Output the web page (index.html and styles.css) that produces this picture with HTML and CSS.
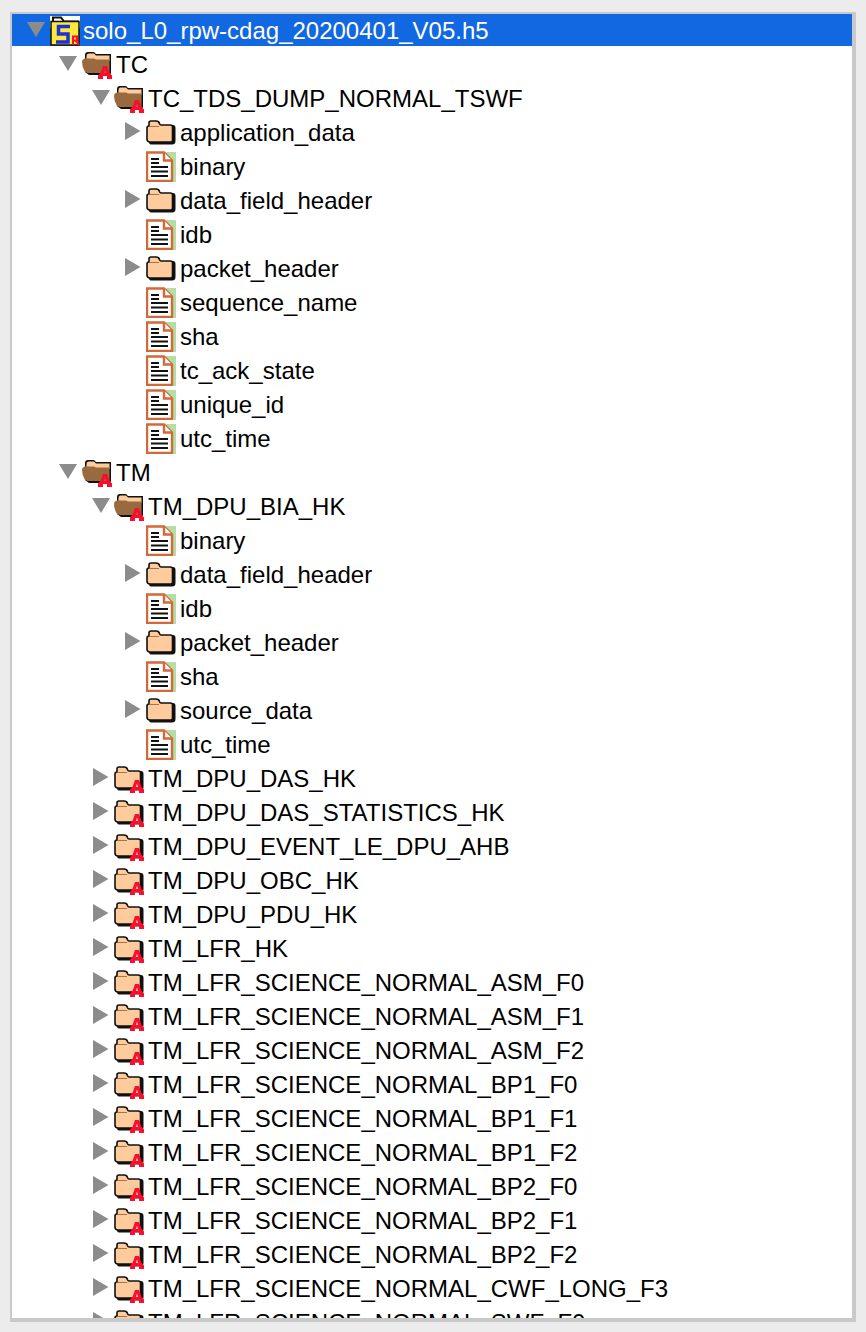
FILE: index.html
```html
<!DOCTYPE html>
<html lang="en">
<head>
<meta charset="utf-8">
<title>HDF5 tree</title>
<link rel="stylesheet" href="styles.css">
</head>
<body>
<svg class="defs" width="0" height="0" aria-hidden="true">
  <defs>
    <symbol id="tri-down" viewBox="0 0 20 20"><polygon points="0,2 18,2 9,17" fill="#8c8c8c"/></symbol>
    <symbol id="tri-right" viewBox="0 0 20 20"><polygon points="1,0 16.500,9 1,18" fill="#8c8c8c"/></symbol>
    <symbol id="attr" viewBox="0 0 32 32" overflow="visible">
      <path fill-rule="evenodd" d="M21 18H25L27.500 25L30 27.500V31H25V28H21V31H16V27.500L18.500 25ZM23 21.500L21.800 25H24.200Z" fill="#fb0d2c"/>
    </symbol>
    <symbol id="folder" viewBox="0 0 32 32" overflow="visible">
      <path d="M4 8Q4 6 6 6H12L15 9H27Q29.500 9 29.500 12V25Q29.500 28.500 26 28.500H5Q3 28.500 3 26Z" fill="#111"/>
      <path d="M3 10Q1 10 1 12V23Q1 26 4 26H24.500Q26.500 26 26.500 24V11Q26.500 9 24.500 9H15Q14 9 13.500 7.500Q13 5 10 5H5Q3 5 3 7Z" fill="#fdcb9c" stroke="#111" stroke-width="1.600"/>
      <path d="M3.500 10.500H13" fill="none" stroke="#a5744a" stroke-width="1"/>
    </symbol>
    <symbol id="open" viewBox="0 0 32 32" overflow="visible">
      <path d="M3 7Q3 4 6 4H12L14 6H29V25L28 27H7L3 24Z" fill="#111"/>
      <path d="M4.500 8Q4.500 5.500 6.500 5.500H12L14 7.500H27.500V13H4.500Z" fill="#fdcb9c"/>
      <path d="M0 14Q0 11 3 10.500H12L14 11.500H27.500V25H6L3 24Q0 19 0 14Z" fill="#9a6a3f"/>
    </symbol>
    <symbol id="doc" viewBox="0 0 32 32">
      <rect x="20" y="2" width="10" height="30" fill="#b5dea5"/>
      <path d="M1 2.500H18L26 10.500V31H1Z" fill="#fff" stroke="#d3683a" stroke-width="2.400"/>
      <path d="M18 2.500V10.500H26" fill="#fff" stroke="#d3683a" stroke-width="2.400"/>
      <path d="M5 9H13M5 13H13M5 17H22M5 21.500H22M5 26H22" stroke="#111" stroke-width="2.200"/>
    </symbol>
    <symbol id="h5" viewBox="0 0 32 32">
      <rect x="0" y="2" width="30" height="12" fill="#fff"/>
      <path d="M3 9V3.500H11L14 7.500H29" fill="none" stroke="#111" stroke-width="2"/>
      <rect x="1" y="7.500" width="28" height="23.500" fill="#fde93a" stroke="#111" stroke-width="1.500"/>
      <path d="M20 12.500H8.500V20H18V28H6" fill="none" stroke="#1c2fd8" stroke-width="3.500"/>
      <path d="M23 31V22.500H27V26.500H23M26 27L29 31" fill="none" stroke="#fb0d2c" stroke-width="2"/>
    </symbol>
  </defs>
</svg>

<main class="panel">
  <div class="row l0 selected"><svg class="tw"><use href="#tri-down"/></svg><svg class="ic"><use href="#h5"/></svg><span class="lb">solo_L0_rpw-cdag_20200401_V05.h5</span></div>
  <div class="row l1"><svg class="tw"><use href="#tri-down"/></svg><svg class="ic"><use href="#open"/><use href="#attr"/></svg><span class="lb">TC</span></div>
  <div class="row l2"><svg class="tw"><use href="#tri-down"/></svg><svg class="ic"><use href="#open"/><use href="#attr"/></svg><span class="lb">TC_TDS_DUMP_NORMAL_TSWF</span></div>
  <div class="row l3"><svg class="tw"><use href="#tri-right"/></svg><svg class="ic"><use href="#folder"/></svg><span class="lb">application_data</span></div>
  <div class="row l3"><span class="tw"></span><svg class="ic"><use href="#doc"/></svg><span class="lb">binary</span></div>
  <div class="row l3"><svg class="tw"><use href="#tri-right"/></svg><svg class="ic"><use href="#folder"/></svg><span class="lb">data_field_header</span></div>
  <div class="row l3"><span class="tw"></span><svg class="ic"><use href="#doc"/></svg><span class="lb">idb</span></div>
  <div class="row l3"><svg class="tw"><use href="#tri-right"/></svg><svg class="ic"><use href="#folder"/></svg><span class="lb">packet_header</span></div>
  <div class="row l3"><span class="tw"></span><svg class="ic"><use href="#doc"/></svg><span class="lb">sequence_name</span></div>
  <div class="row l3"><span class="tw"></span><svg class="ic"><use href="#doc"/></svg><span class="lb">sha</span></div>
  <div class="row l3"><span class="tw"></span><svg class="ic"><use href="#doc"/></svg><span class="lb">tc_ack_state</span></div>
  <div class="row l3"><span class="tw"></span><svg class="ic"><use href="#doc"/></svg><span class="lb">unique_id</span></div>
  <div class="row l3"><span class="tw"></span><svg class="ic"><use href="#doc"/></svg><span class="lb">utc_time</span></div>
  <div class="row l1"><svg class="tw"><use href="#tri-down"/></svg><svg class="ic"><use href="#open"/><use href="#attr"/></svg><span class="lb">TM</span></div>
  <div class="row l2"><svg class="tw"><use href="#tri-down"/></svg><svg class="ic"><use href="#open"/><use href="#attr"/></svg><span class="lb">TM_DPU_BIA_HK</span></div>
  <div class="row l3"><span class="tw"></span><svg class="ic"><use href="#doc"/></svg><span class="lb">binary</span></div>
  <div class="row l3"><svg class="tw"><use href="#tri-right"/></svg><svg class="ic"><use href="#folder"/></svg><span class="lb">data_field_header</span></div>
  <div class="row l3"><span class="tw"></span><svg class="ic"><use href="#doc"/></svg><span class="lb">idb</span></div>
  <div class="row l3"><svg class="tw"><use href="#tri-right"/></svg><svg class="ic"><use href="#folder"/></svg><span class="lb">packet_header</span></div>
  <div class="row l3"><span class="tw"></span><svg class="ic"><use href="#doc"/></svg><span class="lb">sha</span></div>
  <div class="row l3"><svg class="tw"><use href="#tri-right"/></svg><svg class="ic"><use href="#folder"/></svg><span class="lb">source_data</span></div>
  <div class="row l3"><span class="tw"></span><svg class="ic"><use href="#doc"/></svg><span class="lb">utc_time</span></div>
  <div class="row l2"><svg class="tw"><use href="#tri-right"/></svg><svg class="ic"><use href="#folder"/><use href="#attr"/></svg><span class="lb">TM_DPU_DAS_HK</span></div>
  <div class="row l2"><svg class="tw"><use href="#tri-right"/></svg><svg class="ic"><use href="#folder"/><use href="#attr"/></svg><span class="lb">TM_DPU_DAS_STATISTICS_HK</span></div>
  <div class="row l2"><svg class="tw"><use href="#tri-right"/></svg><svg class="ic"><use href="#folder"/><use href="#attr"/></svg><span class="lb">TM_DPU_EVENT_LE_DPU_AHB</span></div>
  <div class="row l2"><svg class="tw"><use href="#tri-right"/></svg><svg class="ic"><use href="#folder"/><use href="#attr"/></svg><span class="lb">TM_DPU_OBC_HK</span></div>
  <div class="row l2"><svg class="tw"><use href="#tri-right"/></svg><svg class="ic"><use href="#folder"/><use href="#attr"/></svg><span class="lb">TM_DPU_PDU_HK</span></div>
  <div class="row l2"><svg class="tw"><use href="#tri-right"/></svg><svg class="ic"><use href="#folder"/><use href="#attr"/></svg><span class="lb">TM_LFR_HK</span></div>
  <div class="row l2"><svg class="tw"><use href="#tri-right"/></svg><svg class="ic"><use href="#folder"/><use href="#attr"/></svg><span class="lb">TM_LFR_SCIENCE_NORMAL_ASM_F0</span></div>
  <div class="row l2"><svg class="tw"><use href="#tri-right"/></svg><svg class="ic"><use href="#folder"/><use href="#attr"/></svg><span class="lb">TM_LFR_SCIENCE_NORMAL_ASM_F1</span></div>
  <div class="row l2"><svg class="tw"><use href="#tri-right"/></svg><svg class="ic"><use href="#folder"/><use href="#attr"/></svg><span class="lb">TM_LFR_SCIENCE_NORMAL_ASM_F2</span></div>
  <div class="row l2"><svg class="tw"><use href="#tri-right"/></svg><svg class="ic"><use href="#folder"/><use href="#attr"/></svg><span class="lb">TM_LFR_SCIENCE_NORMAL_BP1_F0</span></div>
  <div class="row l2"><svg class="tw"><use href="#tri-right"/></svg><svg class="ic"><use href="#folder"/><use href="#attr"/></svg><span class="lb">TM_LFR_SCIENCE_NORMAL_BP1_F1</span></div>
  <div class="row l2"><svg class="tw"><use href="#tri-right"/></svg><svg class="ic"><use href="#folder"/><use href="#attr"/></svg><span class="lb">TM_LFR_SCIENCE_NORMAL_BP1_F2</span></div>
  <div class="row l2"><svg class="tw"><use href="#tri-right"/></svg><svg class="ic"><use href="#folder"/><use href="#attr"/></svg><span class="lb">TM_LFR_SCIENCE_NORMAL_BP2_F0</span></div>
  <div class="row l2"><svg class="tw"><use href="#tri-right"/></svg><svg class="ic"><use href="#folder"/><use href="#attr"/></svg><span class="lb">TM_LFR_SCIENCE_NORMAL_BP2_F1</span></div>
  <div class="row l2"><svg class="tw"><use href="#tri-right"/></svg><svg class="ic"><use href="#folder"/><use href="#attr"/></svg><span class="lb">TM_LFR_SCIENCE_NORMAL_BP2_F2</span></div>
  <div class="row l2"><svg class="tw"><use href="#tri-right"/></svg><svg class="ic"><use href="#folder"/><use href="#attr"/></svg><span class="lb">TM_LFR_SCIENCE_NORMAL_CWF_LONG_F3</span></div>
  <div class="row l2"><svg class="tw"><use href="#tri-right"/></svg><svg class="ic"><use href="#folder"/><use href="#attr"/></svg><span class="lb">TM_LFR_SCIENCE_NORMAL_SWF_F0</span></div>
</main>
</body>
</html>
```
FILE: styles.css
```css
html, body {
  margin: 0;
  height: 100%;
}
body {
  background: #ececec;
  padding: 12px 10px 10px;
  box-sizing: border-box;
  overflow: hidden;
  font-family: "Liberation Sans", Arial, sans-serif;
  font-size: 24px;
  color: #000;
}
.defs {
  display: block;
  height: 0;
}
.panel {
  box-sizing: border-box;
  width: 846px;
  height: 1310px;
  background: #fff;
  border-style: solid;
  border-color: #c9c9c9;
  border-width: 2px 4px 4px 2px;
  overflow: hidden;
  display: flex;
  flex-direction: column;
  gap: 2px;
}
.row {
  flex: none;
  height: 32px;
  display: flex;
  align-items: center;
  white-space: nowrap;
}
.selected {
  background: #1268e0;
  color: #fff;
}
.l0 { padding-left: 15px; }
.l1 { padding-left: 47px; }
.l2 { padding-left: 80px; }
.l3 { padding-left: 112px; }
.tw {
  flex: none;
  display: block;
  width: 20px;
  height: 20px;
  margin-right: 3px;
}
.l2 .tw,
.l3 .tw {
  margin-right: 2px;
}
.ic {
  flex: none;
  display: block;
  width: 32px;
  height: 32px;
  overflow: visible;
  margin-right: 2px;
}
.l0 .ic {
  margin-right: 1px;
}
.lb {
  display: block;
  line-height: 32px;
  padding-top: 2px;
}
```
